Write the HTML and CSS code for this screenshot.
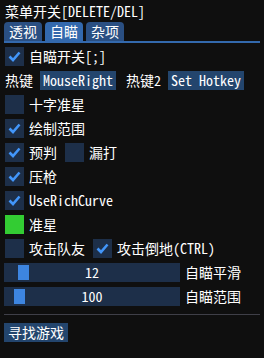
FILE: index.html
```html
<!DOCTYPE html>
<html lang="zh">
<head>
    <meta charset="UTF-8">
    <title>菜单</title>
    <link rel="stylesheet" href="styles.css">
</head>
<body>
    <div class="menu">
        <div class="title">菜单开关[DELETE/DEL]</div>

        <div class="tabs">
            <span class="tab">透视</span>
            <span class="tab active">自瞄</span>
            <span class="tab">杂项</span>
        </div>

        <div class="rows">
            <div class="row">
                <span class="box checked"><svg viewBox="0 0 19 19"><polyline points="4.5,9.5 8,13 14.5,5.5"/></svg></span>
                <span>自瞄开关[;]</span>
            </div>
            <div class="row hotkeys">
                <span>热键</span>
                <span class="btn">MouseRight</span>
                <span class="after">热键2</span>
                <span class="btn">Set Hotkey</span>
            </div>
            <div class="row">
                <span class="box"></span>
                <span>十字准星</span>
            </div>
            <div class="row">
                <span class="box checked"><svg viewBox="0 0 19 19"><polyline points="4.5,9.5 8,13 14.5,5.5"/></svg></span>
                <span>绘制范围</span>
            </div>
            <div class="row">
                <span class="box checked"><svg viewBox="0 0 19 19"><polyline points="4.5,9.5 8,13 14.5,5.5"/></svg></span>
                <span>预判</span>
                <span class="box after"></span>
                <span>漏打</span>
            </div>
            <div class="row">
                <span class="box checked"><svg viewBox="0 0 19 19"><polyline points="4.5,9.5 8,13 14.5,5.5"/></svg></span>
                <span>压枪</span>
            </div>
            <div class="row">
                <span class="box checked"><svg viewBox="0 0 19 19"><polyline points="4.5,9.5 8,13 14.5,5.5"/></svg></span>
                <span>UseRichCurve</span>
            </div>
            <div class="row">
                <span class="swatch"></span>
                <span>准星</span>
            </div>
            <div class="row">
                <span class="box"></span>
                <span>攻击队友</span>
                <span class="box checked after"><svg viewBox="0 0 19 19"><polyline points="4.5,9.5 8,13 14.5,5.5"/></svg></span>
                <span>攻击倒地(CTRL)</span>
            </div>
            <div class="row">
                <div class="slider">
                    <span class="grab" style="left: 14px"></span>
                    <span class="value">12</span>
                </div>
                <span>自瞄平滑</span>
            </div>
            <div class="row">
                <div class="slider">
                    <span class="grab" style="left: 10px"></span>
                    <span class="value">100</span>
                </div>
                <span>自瞄范围</span>
            </div>
        </div>

        <div class="separator"></div>

        <span class="btn find">寻找游戏</span>
    </div>
</body>
</html>
```

FILE: styles.css
```css
body {
    margin: 0;
    background-color: #0f0f0f;
    color: #ffffff;
    font-family: "Noto Sans Mono CJK SC", "Noto Sans CJK SC", monospace;
    font-size: 14px;
    line-height: 19px;
}

.menu {
    padding: 2px 4px;
    width: 256px;
    height: 354px;
}

.title {
    padding-left: 1px;
    height: 19px;
}

.tabs {
    display: flex;
    gap: 3px;
    margin-top: 1px;
    border-bottom: 2px solid #3369ad;
}

.tab {
    background: #2a4f82;
    padding: 0 5px;
    height: 19px;
    line-height: 19px;
    border-radius: 4px 4px 0 0;
}

.tab.active {
    background: #3369ad;
}

.rows {
    display: flex;
    flex-direction: column;
    gap: 5px;
    margin-top: 4px;
}

.row {
    display: flex;
    align-items: center;
    gap: 5px;
    height: 19px;
}

.row.hotkeys {
    gap: 7px;
    padding-left: 1px;
}

.box {
    width: 19px;
    height: 19px;
    background: #1d2f49;
    margin-left: 1px;
}

.box svg {
    display: block;
    width: 19px;
    height: 19px;
}

.box polyline {
    fill: none;
    stroke: #4296fa;
    stroke-width: 2.6;
}

.after {
    margin-left: 3px;
}

.swatch {
    width: 19px;
    height: 19px;
    margin-left: 1px;
    background: #33cc33;
}

.btn {
    background: #23456d;
    padding: 0 3px;
    height: 19px;
}

.find {
    display: inline-block;
    padding: 0 4px;
}

.slider {
    position: relative;
    width: 176px;
    height: 19px;
    background: #1d2f49;
    text-align: center;
}

.grab {
    position: absolute;
    top: 2px;
    width: 11px;
    height: 15px;
    background: #3d85e0;
}

.value {
    position: relative;
}

.separator {
    height: 1px;
    background: #3f3f48;
    margin: 8px 0;
}
```
